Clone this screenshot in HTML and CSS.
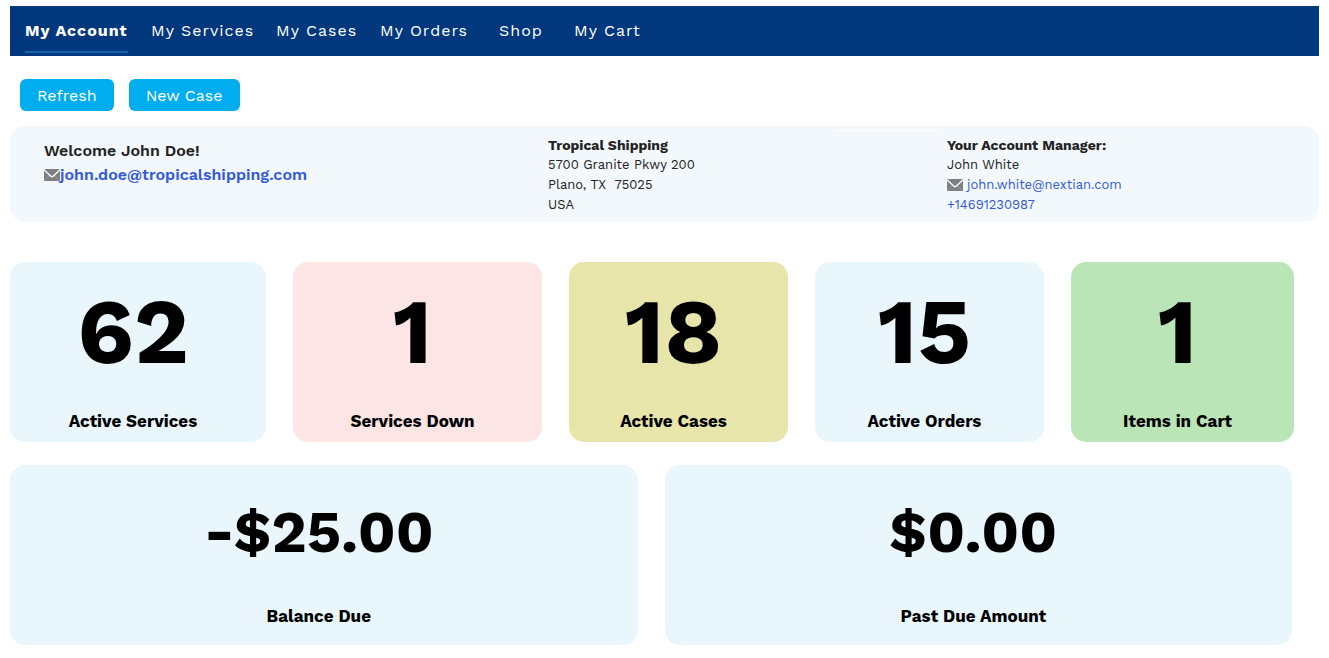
FILE: index.html
```
<!DOCTYPE html>
<html lang="en">
<head>
<meta charset="utf-8">
<meta name="viewport" content="width=device-width, initial-scale=1">
<title>My Account</title>
<link rel="stylesheet" href="styles.css">
</head>
<body>
<svg class="sprite" aria-hidden="true">
  <symbol id="mail" viewBox="0 0 16 12">
    <path fill="#7d7f82" d="M1 0h14a1 1 0 0 1 1 1v10a1 1 0 0 1-1 1H1a1 1 0 0 1-1-1V1a1 1 0 0 1 1-1z"/>
    <path fill="none" stroke="#f3f8fc" stroke-width="1.5" d="M0 .8l6.800 6.400q1.200 1 2.400 0L16 .8"/>
    <path fill="none" stroke="#a3a5a8" stroke-width=".6" d="M.5 11.500l4.600-4.600M15.500 11.500l-4.600-4.600"/>
  </symbol>
</svg>
<nav class="nav">
  <a class="nav-link active" href="#" aria-current="page">My Account</a>
  <a class="nav-link" href="#">My Services</a>
  <a class="nav-link" href="#">My Cases</a>
  <a class="nav-link" href="#">My Orders</a>
  <a class="nav-link" href="#">Shop</a>
  <a class="nav-link" href="#">My Cart</a>
</nav>
<main>
  <div class="actions">
    <button class="btn" type="button">Refresh</button>
    <button class="btn" type="button">New Case</button>
  </div>
  <section class="info">
    <div class="welcome">
      <div>Welcome John Doe!</div>
      <div class="row"><svg class="mail"><use href="#mail"/></svg><a href="#">john.doe@tropicalshipping.com</a></div>
    </div>
    <address class="details">
      <strong>Tropical Shipping</strong>
      <span>5700 Granite Pkwy 200</span>
      <span>Plano, TX&nbsp; 75025</span>
      <span>USA</span>
    </address>
    <div class="details">
      <strong>Your Account Manager:</strong>
      <span>John White</span>
      <span class="row spaced"><svg class="mail"><use href="#mail"/></svg><a href="#">john.white@nextian.com</a></span>
      <a href="#">+14691230987</a>
    </div>
  </section>
  <section class="cards stats">
    <div class="card"><div class="value">62</div><div class="label">Active Services</div></div>
    <div class="card red"><div class="value">1</div><div class="label">Services Down</div></div>
    <div class="card yellow"><div class="value">18</div><div class="label">Active Cases</div></div>
    <div class="card"><div class="value">15</div><div class="label">Active Orders</div></div>
    <div class="card green"><div class="value">1</div><div class="label">Items in Cart</div></div>
  </section>
  <section class="cards balances">
    <div class="card"><div class="value amount">-$25.00</div><div class="label">Balance Due</div></div>
    <div class="card"><div class="value amount">$0.00</div><div class="label">Past Due Amount</div></div>
  </section>
</main>
</body>
</html>
```
FILE: styles.css
```
* { box-sizing: border-box; }
body {
  margin: 0;
  padding: 6px 10px 12px;
  background: #fff;
  color: #222;
  font-family: "Work Sans", Inter, "Liberation Sans", sans-serif;
  font-size: 13px;
}
.sprite { display: none; }
a { color: #3459dd; text-decoration: none; }

.nav {
  display: grid;
  grid-template-columns: 126px 125px 104px 119px 75px auto;
  justify-content: start;
  justify-items: start;
  padding: 3px 15px;
  background: #00377d;
}
.nav-link {
  padding: 10px 0 8px;
  border-bottom: 2px solid transparent;
  color: #fff;
  font-size: 16px;
  line-height: 24px;
  letter-spacing: 1px;
}
.nav-link.active { border-color: #1662a8; font-weight: 700; }

.actions { display: flex; gap: 15px; padding: 23px 10px 15px; }
.btn {
  height: 32px;
  padding: 0 17px;
  border: 0;
  border-radius: 6px;
  background: #00adef;
  color: #fff;
  font: inherit;
  font-size: 16px;
}

.info {
  position: relative;
  display: grid;
  grid-template-columns: 504fr 399fr 372fr;
  padding: 9px 0 7px 34px;
  border-radius: 15px;
  background: #f3f8fc;
}
.info::before {
  content: "";
  position: absolute;
  top: 4px;
  left: 63%;
  width: 8%;
  height: 1px;
  background: #fff;
}
.welcome { padding-top: 4px; font-size: 16px; font-weight: 600; line-height: 24px; }
.details { display: flex; flex-direction: column; font-style: normal; line-height: 20px; }
.details strong { font-size: 14px; }
.row { display: flex; align-items: center; }
.spaced { gap: 4px; }
.mail { flex: none; width: 16px; height: 12px; }

.cards { display: grid; gap: 27px; margin-right: 25px; }
.stats { grid-template-columns: 256fr 249fr 219fr 229fr 223fr; margin-top: 40px; }
.balances { grid-template-columns: 1fr 1fr; margin-top: 23px; margin-right: 27px; }
.card {
  padding: 20px 10px 9px 0;
  border-radius: 15px;
  background: #e9f7fd;
  color: #000;
  font-weight: 700;
  text-align: center;
}
.red { background: #fce6e5; }
.yellow { background: #e7e5a9; }
.green { background: #b9e5b7; }
.value { height: 100px; font-size: 92px; line-height: 98px; }
.label { margin-top: 27px; font-size: 17px; line-height: 24px; }
.amount { font-size: 59px; line-height: 94px; }
.balances .label { margin-top: 19px; margin-bottom: 8px; }
```
